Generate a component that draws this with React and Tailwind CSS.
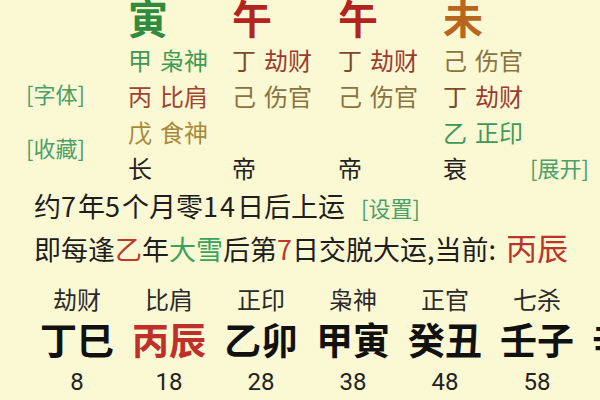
import React from 'react';

const pillars = [
  {
    gan: '寅',
    ganColor: 'text-[#2f8c3f]',
    rows: [
      [['甲', 'text-[#3f9a55]'], ['枭神', 'text-[#3f9a55]']],
      [['丙', 'text-[#a2432f]'], ['比肩', 'text-[#a2432f]']],
      [['戊', 'text-[#a88a3a]'], ['食神', 'text-[#a88a3a]']],
    ],
    stage: '长',
  },
  {
    gan: '午',
    ganColor: 'text-[#b3241f]',
    rows: [
      [['丁', 'text-[#7b4a2a]'], ['劫财', 'text-[#9c3b30]']],
      [['己', 'text-[#8a7340]'], ['伤官', 'text-[#8a7340]']],
    ],
    stage: '帝',
  },
  {
    gan: '午',
    ganColor: 'text-[#b3241f]',
    rows: [
      [['丁', 'text-[#7b4a2a]'], ['劫财', 'text-[#9c3b30]']],
      [['己', 'text-[#8a7340]'], ['伤官', 'text-[#8a7340]']],
    ],
    stage: '帝',
  },
  {
    gan: '未',
    ganColor: 'text-[#b8661e]',
    rows: [
      [['己', 'text-[#8a7340]'], ['伤官', 'text-[#8a7340]']],
      [['丁', 'text-[#7b4a2a]'], ['劫财', 'text-[#9c3b30]']],
      [['乙', 'text-[#3f9a55]'], ['正印', 'text-[#3f9a55]']],
    ],
    stage: '衰',
  },
];

const dayun = [
  { shen: '劫财', gz: '丁巳', age: 8 },
  { shen: '比肩', gz: '丙辰', age: 18, current: true },
  { shen: '正印', gz: '乙卯', age: 28 },
  { shen: '枭神', gz: '甲寅', age: 38 },
  { shen: '正官', gz: '癸丑', age: 48 },
  { shen: '七杀', gz: '壬子', age: 58 },
  { shen: '偏财', gz: '辛亥', age: 68 },
];

// digits in the source font run wider than Noto's
const Num = ({ children, className = '' }) => (
  <span className={`tracking-[2px] ${className}`}>{children}</span>
);

const Pillar = ({ p }) => (
  <div className="flex flex-col">
    <div className={`h-[40px] -mt-[3px] text-[40px] leading-[40px] font-bold ${p.ganColor}`}>{p.gan}</div>
    <div className="mt-[5px]">
      {[0, 1, 2].map((i) => (
        <div key={i} className="h-[36px] text-[24px] leading-[36px] whitespace-nowrap">
          {p.rows[i] && (
            <>
              <span className={p.rows[i][0][1]}>{p.rows[i][0][0]}</span>
              <span className={`ml-[8px] ${p.rows[i][1][1]}`}>{p.rows[i][1][0]}</span>
            </>
          )}
        </div>
      ))}
      <div className="h-[36px] text-[24px] leading-[36px] text-[#222]">{p.stage}</div>
    </div>
  </div>
);

export default function App() {
  return (
    <div className="w-[600px] h-[400px] overflow-hidden bg-[#fbf8d4] text-[#1e1e1e] font-['Noto_Sans_CJK_SC','Noto_Sans',sans-serif]">
      <div className="flex">
        <div className="w-[128px] pl-[26px] pt-[75px] flex flex-col text-[22px] leading-[36px] text-[#4a9f6a]">
          <span>[字体]</span>
          <span className="mt-[18px]">[收藏]</span>
        </div>
        <div className="grid grid-cols-[104px_106px_105px_87px]">
          {pillars.map((p, i) => (
            <Pillar key={i} p={p} />
          ))}
        </div>
        <div className="pt-[149px] text-[22px] leading-[36px] text-[#4a9f6a] whitespace-nowrap">[展开]</div>
      </div>

      <div className="pl-[34px] text-[27px] leading-[40px] whitespace-nowrap">
        <div>
          约<Num>7</Num>年<Num>5</Num>个月零<Num>14</Num>日后上运
          <span className="ml-[16px] text-[22px] text-[#4a9f6a]">[设置]</span>
        </div>
        <div>
          即每逢<span className="text-[#c0392b]">乙</span>年<span className="text-[#3aa35a]">大雪</span>后第
          <span className="text-[#c0392b]">7</span>日交脱大运,当前:
          <span className="ml-[10px] text-[31px] text-[#b8362a]">丙辰</span>
        </div>
      </div>

      <div className="flex pl-[31px] mt-[15px] whitespace-nowrap">
        {dayun.map((d, i) => (
          <div key={i} className="w-[92px] shrink-0 flex flex-col items-center">
            <div className="text-[24px] leading-[30px] text-[#2a2a2a]">{d.shen}</div>
            <div
              className={`mt-[3px] text-[37px] leading-[44px] font-bold ${
                d.current ? 'text-[#c0302a]' : 'text-[#111]'
              }`}
            >
              {d.gz}
            </div>
            <div className="mt-[6px] text-[24px] leading-[30px] text-[#222] font-['Roboto',sans-serif]">{d.age}</div>
          </div>
        ))}
      </div>
    </div>
  );
}
